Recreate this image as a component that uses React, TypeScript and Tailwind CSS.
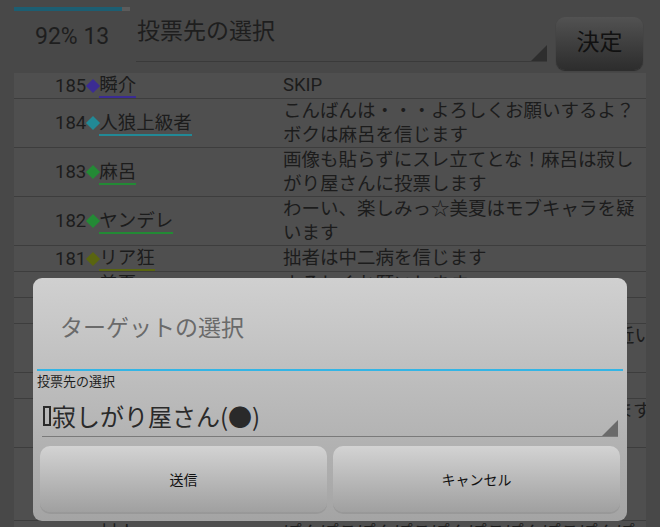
import React from "react";

interface LogRow {
  no: number;
  color: string;
  name: string;
  lines: string[];
}

const rows: LogRow[] = [
  { no: 185, color: "#3b2c93", name: "瞬介", lines: ["SKIP"] },
  {
    no: 184,
    color: "#228996",
    name: "人狼上級者",
    lines: ["こんばんは・・・よろしくお願いするよ？", "ボクは麻呂を信じます"],
  },
  {
    no: 183,
    color: "#238a35",
    name: "麻呂",
    lines: ["画像も貼らずにスレ立てとな！麻呂は寂し", "がり屋さんに投票します"],
  },
  {
    no: 182,
    color: "#238a35",
    name: "ヤンデレ",
    lines: ["わーい、楽しみっ☆美夏はモブキャラを疑", "います"],
  },
  { no: 181, color: "#5a6510", name: "リア狂", lines: ["拙者は中二病を信じます"] },
  { no: 180, color: "#8a2b2b", name: "美夏", lines: ["よろしくお願いします"] },
  { no: 179, color: "#2b4d8a", name: "モブキャラ", lines: ["SKIP"] },
  {
    no: 178,
    color: "#238a35",
    name: "中二病",
    lines: ["我が右腕に封印されし力が目覚める時は近い", "フハハハハ"],
  },
  { no: 177, color: "#8a6b1b", name: "寂しがり屋さん", lines: ["誰か話しかけてほしいな"] },
  {
    no: 176,
    color: "#228996",
    name: "狐",
    lines: ["今日はどこに投票しようか迷ってしまいます", "です"],
  },
  {
    no: 175,
    color: "#3b2c93",
    name: "占い師",
    lines: ["占い結果は白でした、ノ", "ふむふむ、なるほどね", "まあいいか"],
  },
  { no: 174, color: "#5a6510", name: "村人", lines: ["ぽんぽこぽんぽこぽんぽこぽんぽこぽんぽ"] },
];

export default function App() {
  return (
    <div
      className="relative w-[660px] h-[527px] overflow-hidden bg-[#484848] text-[#1c1c1c]"
      style={{ fontFamily: "Roboto, 'Noto Sans CJK JP', sans-serif" }}
    >
      {/* ================= HEADER ================= */}
      <div className="flex h-[73px]">
        <div className="w-[136px] shrink-0">
          <div className="mt-[7px] ml-[14px] w-[116px] h-[4px] bg-[#5b5b5b]">
            <div className="w-[108px] h-full bg-[#1c5e72]" />
          </div>
          <div className="mt-[12px] pl-[35px] text-[23px] leading-[28px] text-[#1e1e1e]">92% 13</div>
        </div>

        <div className="relative w-[411px] shrink-0 self-start pt-[17px] pb-[14px] border-b border-[#3a3a3a]">
          <div className="text-[23px] leading-[30px] pl-[1px] text-[#1e1e1e]">投票先の選択</div>
          <div className="absolute right-0 bottom-0 w-0 h-0 border-l-[16px] border-l-transparent border-b-[16px] border-b-[#2e2e2e]" />
        </div>

        <button className="ml-[9px] mt-[17px] w-[87px] h-[53px] rounded-[9px] bg-gradient-to-b from-[#525252] to-[#2d2d2d] text-[23px] text-[#111] shadow-[0_1px_1px_rgba(0,0,0,0.4)]">
          決定
        </button>
      </div>

      {/* ================= LOG TABLE ================= */}
      <div className="mx-[14px] bg-[#4f4f4f]">
        {rows.map((row) => (
          <div key={row.no} className="flex border-b border-[#3d3d3d] text-[18.5px] leading-[24px]">
            <div className="w-[269px] shrink-0 pl-[41px] flex items-center">
              <span>{row.no}</span>
              <span
                className="inline-block w-[10px] h-[10px] rotate-45 ml-[2px] mr-[1px]"
                style={{ backgroundColor: row.color }}
              />
              <span
                className="inline-block leading-[21px] border-b-2 mt-[2px]"
                style={{ borderColor: row.color }}
              >
                {row.name}
              </span>
            </div>
            <div className="flex-1 whitespace-nowrap overflow-hidden">
              {row.lines.map((line, i) => (
                <div key={i}>{line}</div>
              ))}
            </div>
          </div>
        ))}
      </div>

      {/* ================= DIALOG ================= */}
      <div
        className="absolute left-[33px] top-[278px] w-[594px] rounded-[9px] bg-gradient-to-b from-[#d0d0d0] to-[#a4a4a4] flex flex-col"
        style={{ fontFamily: "'Noto Sans CJK JP', sans-serif" }}
      >
        <div className="pt-[34px] pl-[27px] text-[23px] leading-[28px] text-[#6a6a6a]">ターゲットの選択</div>
        <div className="mt-[29px] mx-[4px] h-[2px] bg-[#33b5e5]" />
        <div className="mt-[2px] pl-[4px] text-[13px] leading-[16px] text-[#1e1e1e]">投票先の選択</div>

        <div className="relative mx-[9px] pt-[13px] pb-[6px] border-b border-[#7a7a7a]">
          <div className="flex items-center text-[24px] leading-[28px] text-[#2a2a2a]">
            <span className="inline-block w-[8px] h-[20px] border-2 border-[#2a2a2a] mx-[1px]" />
            寂しがり屋さん(●)
          </div>
          <div className="absolute right-0 bottom-0 w-0 h-0 border-l-[16px] border-l-transparent border-b-[16px] border-b-[#6a6a6a]" />
        </div>

        <div className="flex gap-[6px] px-[7px] mt-[9px] mb-[9px]">
          <button className="flex-1 h-[66px] rounded-[10px] bg-gradient-to-b from-[#d3d3d3] to-[#a0a0a0] text-[14px] text-[#111] shadow-[0_2px_0_rgba(0,0,0,0.08)]">
            送信
          </button>
          <button className="flex-1 h-[66px] rounded-[10px] bg-gradient-to-b from-[#d3d3d3] to-[#a0a0a0] text-[14px] text-[#111] shadow-[0_2px_0_rgba(0,0,0,0.08)]">
            キャンセル
          </button>
        </div>
      </div>
    </div>
  );
}
